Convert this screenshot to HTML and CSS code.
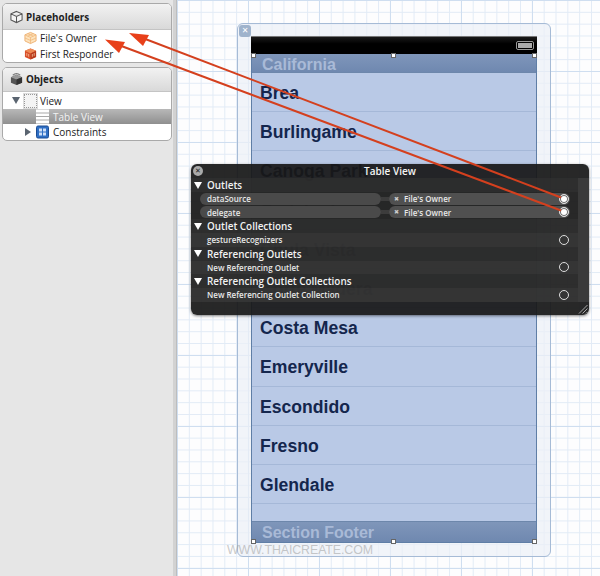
FILE: index.html
```html
<!DOCTYPE html>
<html lang="en">
<head>
<meta charset="utf-8">
<title>Table View outlets</title>
<link rel="stylesheet" href="styles.css">
</head>
<body>
<div class="app">
  <aside class="sidebar">
    <section class="box box-place">
      <h2 class="box-head">
        <svg class="head-icon" viewBox="0 0 14 14"><path d="M7 1 L13 3.6 V10.2 L7 13 L1 10.2 V3.6 Z M1 3.6 L7 6.4 L13 3.6 M7 6.4 V13" fill="#f4f4f4" stroke="#555" stroke-width="1.1"/></svg>
        Placeholders
      </h2>
      <div class="item item-place">
        <svg class="item-icon" viewBox="0 0 14 14"><path d="M7 1 L13 3.6 V10.2 L7 13 L1 10.2 V3.6 Z" fill="#fde3bd" stroke="#eeb072"/><path d="M1 3.6 L7 6.4 L13 3.6 M7 6.4 V13 M4 2.3 L10 5 M10 2.3 L4 5 M1 7 L7 9.6 L13 7" fill="none" stroke="#efb679" stroke-width=".8"/></svg>
        File's Owner
      </div>
      <div class="item item-place">
        <svg class="item-icon" viewBox="0 0 14 14"><path d="M7 1 L13 3.6 V10.2 L7 13 L1 10.2 V3.6 Z" fill="#d9502a"/><path d="M1 3.6 L7 6.4 L13 3.6 L7 1 Z" fill="#ee8a55"/><path d="M7 6.4 V13 L13 10.2 V3.6 Z" fill="#b93d1e"/><path d="M3 6 V9 M5 7 V10 M9 7 V10 M11 6 V9" stroke="#f8c9a4" stroke-width=".8"/></svg>
        First Responder
      </div>
    </section>
    <section class="box">
      <h2 class="box-head box-head-obj">
        <svg class="head-icon" viewBox="0 0 14 14"><path d="M7 2.5 L13 5 V11 L7 13.5 L1 11 V5 Z" fill="#555"/><path d="M1 5 L7 7.5 L13 5 L7 2.5 Z" fill="#999"/><path d="M7 7.5 V13.5 L13 11 V5 Z" fill="#333"/><path d="M3 3 Q7 -.5 11 3" fill="none" stroke="#777" stroke-width="1.2"/></svg>
        Objects
      </h2>
      <div class="item item-view">
        <span class="tri tri-down"></span>
        <span class="view-icon"></span>
        View
      </div>
      <div class="item item-table">
        <svg class="item-icon table-icon" viewBox="0 0 13 14"><rect width="13" height="14" fill="#fff"/><path d="M0 3.5 H13 M0 7 H13 M0 10.5 H13" stroke="#a9a9a9"/></svg>
        Table View
      </div>
      <div class="item item-cons">
        <span class="tri tri-right"></span>
        <svg class="item-icon" viewBox="0 0 13 13"><rect x=".5" y=".5" width="12" height="12" rx="1.5" fill="#2f6fc4" stroke="#1b4c94"/><path d="M3 3 H6 V6 H3 Z M7 3 H10 V6 H7 Z M3 7 H6 V10 H3 Z M7 7 H10 V10 H7 Z" fill="#cfe0f7"/></svg>
        Constraints
      </div>
    </section>
  </aside>

  <main class="canvas">
    <div class="frame">
      <span class="frame-close">✕</span>
      <div class="device">
        <div class="status">
          <span class="battery"><span class="battery-fill"></span></span>
        </div>
        <div class="section section-head">California</div>
        <div class="row">Brea</div>
        <div class="row">Burlingame</div>
        <div class="row">Canoga Park</div>
        <div class="row">Carlsbad</div>
        <div class="row">Chula Vista</div>
        <div class="row">Corte Madera</div>
        <div class="row">Costa Mesa</div>
        <div class="row">Emeryville</div>
        <div class="row">Escondido</div>
        <div class="row">Fresno</div>
        <div class="row">Glendale</div>
        <div class="blank"></div>
        <div class="section section-foot">Section Footer</div>
        <span class="handle h-tl"></span><span class="handle h-tm"></span><span class="handle h-tr"></span>
        <span class="handle h-bl"></span><span class="handle h-bm"></span><span class="handle h-br"></span>
      </div>
    </div>
  </main>
</div>

<div class="hud">
  <div class="hud-title"><span class="hud-close">✕</span>Table View</div>
  <div class="hud-body">
    <div class="hud-list">
      <div class="hud-group"><span class="tri tri-white"></span>Outlets</div>
      <div class="hud-row hud-linked">
        <span class="pill pill-left">dataSource</span><span class="link"></span>
        <span class="pill pill-right"><span class="x">✖</span>File's Owner<span class="dot dot-on"></span></span>
      </div>
      <div class="hud-row hud-linked">
        <span class="pill pill-left">delegate</span><span class="link"></span>
        <span class="pill pill-right"><span class="x">✖</span>File's Owner<span class="dot dot-on"></span></span>
      </div>
      <div class="hud-group"><span class="tri tri-white"></span>Outlet Collections</div>
      <div class="hud-row">gestureRecognizers<span class="dot"></span></div>
      <div class="hud-group"><span class="tri tri-white"></span>Referencing Outlets</div>
      <div class="hud-row">New Referencing Outlet<span class="dot"></span></div>
      <div class="hud-group"><span class="tri tri-white"></span>Referencing Outlet Collections</div>
      <div class="hud-row">New Referencing Outlet Collection<span class="dot"></span></div>
    </div>
    <div class="hud-gutter"></div>
  </div>
  <div class="hud-foot">
    <svg class="grip" viewBox="0 0 10 10"><path d="M9.5 1 L1 9.5 M9.5 4.5 L4.5 9.5 M9.5 8 L8 9.5" stroke="#aaa" stroke-width="1"/></svg>
  </div>
</div>

<svg class="arrows" viewBox="0 0 600 576">
  <path d="M561 197.5 L140 37" stroke="#d4401e" stroke-width="2" fill="none"/>
  <path d="M129 33 L149 35 L143 46 Z" fill="#e8401a"/>
  <path d="M561 210.5 L116 44" stroke="#d4401e" stroke-width="2" fill="none"/>
  <path d="M105 39.5 L125 42 L119 53 Z" fill="#e8401a"/>
</svg>

<div class="watermark">WWW.THAICREATE.COM</div>
</body>
</html>
```

FILE: styles.css
```css
* { box-sizing: border-box; }
html, body { margin: 0; height: 100%; }
body { position: relative; width: 600px; height: 576px; overflow: hidden; font-family: "Open Sans", "DejaVu Sans", sans-serif; }

.app { display: flex; height: 576px; }

.sidebar {
  width: 177px; flex: none; background: #e6e6e6; border-right: 1px solid #bdbdbd;
  padding: 3px 4px 0 2px; display: flex; flex-direction: column; gap: 4px;
  box-shadow: inset -3px 0 0 #d2d2d2;
}
.box { background: #fff; border: 1px solid #a9a9a9; border-radius: 5px; overflow: hidden; }
.box-place { height: 60px; }
.box-head {
  margin: 0; height: 26px; display: flex; align-items: center; gap: 3px; padding: 0 0 0 7px;
  font-size: 9.9px; font-weight: 700; color: #222;
  background: linear-gradient(#f2f2f2, #d9d9d9); border-bottom: 1px solid #c4c4c4;
}
.box-head-obj { height: 24px; padding-bottom: 2px; }
.head-icon { width: 13px; height: 14px; flex: none; }
.item { display: flex; align-items: center; height: 16px; font-size: 10px; color: #222; }
.item-place { padding-left: 21px; gap: 3px; }
.item-icon { width: 13px; height: 14px; flex: none; }
.item-view { padding-left: 9px; height: 17px; }
.view-icon { width: 13px; height: 14px; margin: 0 3px 0 4px; background: #f4f4f4; border: 1px dotted #999; box-shadow: 0 0 0 1px #ddd; }
.item-table { height: 15px; padding-left: 33px; gap: 4px; color: #f2f2f2; background: linear-gradient(#b8b8b8, #8f8f8f); }
.table-icon { height: 15px; }
.item-cons { padding-left: 22px; gap: 4px; }
.item-cons .tri { margin-right: 1px; }

.tri { display: inline-block; width: 0; height: 0; flex: none; }
.tri-down { border-left: 4px solid transparent; border-right: 4px solid transparent; border-top: 7px solid #5a6470; }
.tri-right { border-top: 4px solid transparent; border-bottom: 4px solid transparent; border-left: 6px solid #5a6470; }
.tri-white { border-left: 4px solid transparent; border-right: 4px solid transparent; border-top: 7px solid #fff; margin-right: 5px; }

.canvas {
  position: relative; flex: 1; background-color: #fdfdfe;
  background-image:
    linear-gradient(90deg, #cfdef0 1px, transparent 1px),
    linear-gradient(#cfdef0 1px, transparent 1px),
    linear-gradient(90deg, #e2ebf6 1px, transparent 1px),
    linear-gradient(#e2ebf6 1px, transparent 1px);
  background-size: 71px 71px, 71px 71px, 11.83px 11.83px, 11.83px 11.83px;
}

.frame {
  position: absolute; left: 60px; top: 23px; width: 314px; height: 534px;
  padding: 12px 13px 12px 13px; border: 1px solid #a6bbd6; border-radius: 6px;
  background: rgba(235, 240, 246, .72);
}
.frame-close {
  position: absolute; left: 1px; top: 1px; width: 12px; height: 12px; border-radius: 3px;
  background: #9fb3cc; color: #fff; font: 700 8px/12px "DejaVu Sans", sans-serif; text-align: center;
}
.device {
  position: relative; height: 507px; background: #b9c9e6; border: 1px solid #5f7ea6; border-top: 0;
  display: flex; flex-direction: column;
}
.status {
  height: 18px; margin: 0 -1px; flex: none; background: linear-gradient(#1a1a1a, #000 40%); border-top: 1px solid #777;
  display: flex; align-items: center; justify-content: flex-end; padding-right: 3px;
}
.battery { width: 18px; height: 9px; border: 1px solid #999; border-radius: 2px; padding: 1px; display: block; }
.battery-fill { display: block; height: 100%; background: #aaa; }
.section {
  flex: none; font: 700 16px/21px "Liberation Sans", Arial, sans-serif; color: #a9bad7; padding-left: 10px;
  background: linear-gradient(#7f96ba, #6f88b0); 
}
.section-head { height: 19px; border-bottom: 1px solid #6d87ab; }
.section-foot { height: 21px; line-height: 22px; border-top: 1px solid #6d87ab; }
.row {
  flex: none; height: 39.2px; padding-left: 8px; border-bottom: 1px solid #a5b8d8;
  font: 700 17.6px/41px "Liberation Sans", Arial, sans-serif; color: #14264d;
}
.blank { flex: 1; }
.handle { position: absolute; width: 5px; height: 5px; background: #fff; border: 1px solid #666; }
.h-tl { left: -1px; top: 17px; } .h-tm { left: 139px; top: 17px; } .h-tr { right: -1px; top: 17px; }
.h-bl { left: -1px; bottom: -2px; } .h-bm { left: 139px; bottom: -2px; } .h-br { right: -1px; bottom: -2px; }

.hud {
  position: absolute; left: 191px; top: 164px; width: 398px; height: 151px; border-radius: 6px;
  overflow: hidden; background: rgba(24, 24, 24, .93); box-shadow: 0 1px 3px rgba(0, 0, 0, .5);
  color: #eee; display: flex; flex-direction: column;
}
.hud-title {
  position: relative; height: 14px; flex: none; text-align: center; color: #f4f4f4;
  font-size: 10px; line-height: 15px; font-weight: 600;
}
.hud-close {
  position: absolute; left: 2px; top: 2px; width: 10px; height: 10px; border-radius: 50%;
  background: #aaa; color: #222; font: 700 7px/10px "DejaVu Sans", sans-serif;
}
.hud-body { display: flex; flex: none; height: 124px; }
.hud-list { width: 387px; flex: none; }
.hud-gutter { flex: 1; background: #3a3a3a; }
.hud-group {
  display: flex; align-items: center; height: 14px; padding-left: 3px; font-size: 9.9px; font-weight: 600;
  color: #f2f2f2; background: rgba(48, 48, 48, .75);
}
.hud-row {
  position: relative; display: flex; align-items: center; height: 13.5px; padding-left: 16px;
  font-size: 8px; font-weight: 600; color: #e8e8e8; background: rgba(56, 56, 56, .8);
}
.hud-linked { padding-left: 9px; background: rgba(40, 40, 40, .75); }
.pill { display: flex; align-items: center; height: 12px; border-radius: 6px; background: #4a4a4a; padding-left: 7px; }
.pill-left { width: 181px; }
.pill-right { padding-left: 5px; position: relative; background: #505050; flex: 1; margin-right: 8px; }
.link { width: 8px; height: 4px; background: #3c3c3c; flex: none; }
.x { font-size: 6px; color: #ccc; margin-right: 5px; }
.dot {
  position: absolute; right: 9px; top: 50%; width: 10px; height: 10px; margin-top: -5px; border-radius: 50%;
  border: 1px solid #ddd;
}
.pill-right .dot { right: 1px; }
.dot-on { background: #fff; box-shadow: inset 0 0 0 1px #666; }
.hud-foot { flex: 1; position: relative; }
.grip { position: absolute; right: 1px; bottom: 1px; width: 10px; height: 10px; }

.arrows { position: absolute; left: 0; top: 0; width: 600px; height: 576px; pointer-events: none; }
.watermark {
  position: absolute; left: 227px; top: 543px; font: 400 12.4px/14px "Liberation Sans", Arial, sans-serif;
  color: rgba(165, 165, 165, .6); letter-spacing: -.1px;
}
```
